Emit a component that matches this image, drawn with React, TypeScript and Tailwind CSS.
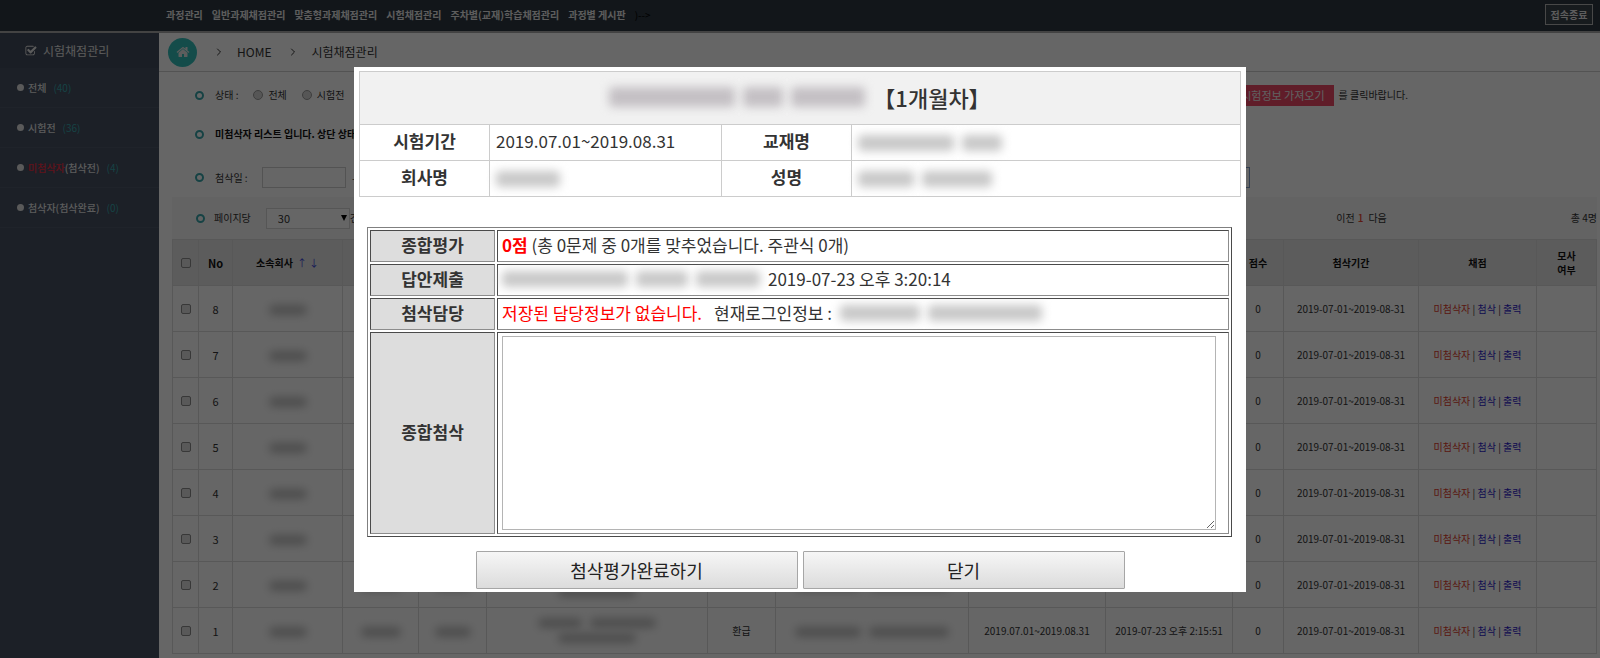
import React from "react";
import { FiChevronRight } from "react-icons/fi";

const NAV = ["과정관리", "일반과제채점관리", "맞춤형과제채점관리", "시험채점관리", "주차별(교재)학습채점관리", "과정별 게시판"];

const SIDE = [
  { label: "전체", alert: "", count: 40 },
  { label: "시험전", alert: "", count: 36 },
  { label: "(첨삭전)", alert: "미첨삭자", count: 4 },
  { label: "첨삭자(첨삭완료)", alert: "", count: 0 },
];

const ROWS = [8, 7, 6, 5, 4, 3, 2, 1];

function HomeIcon() {
  return (
    <svg viewBox="0 0 1792 1792" className="size-[14px]" fill="currentColor" aria-hidden="true">
      <path d="M1472 992v480q0 26-19 45t-45 19h-384v-384h-256v384h-384q-26 0-45-19t-19-45v-480q0-1 .5-3t.5-3l575-474 575 474q1 2 1 6zm223-69l-62 74q-8 9-21 11h-3q-13 0-21-7l-692-577-692 577q-12 8-24 7-13-2-21-11l-62-74q-8-10-7-23.5t11-21.5l719-599q32-26 76-26t76 26l244 204v-195q0-14 9-23t23-9h192q14 0 23 9t9 23v408l219 182q10 8 11 21.5t-7 23.5z" />
    </svg>
  );
}

function CheckSquareIcon() {
  return (
    <svg viewBox="0 0 1792 1792" className="size-3" fill="currentColor" aria-hidden="true">
      <path d="M1472 930v318q0 119-84.5 203.5t-203.5 84.5h-832q-119 0-203.5-84.5t-84.5-203.5v-832q0-119 84.5-203.5t203.5-84.5h832q63 0 117 25 15 7 18 23 3 17-9 29l-49 49q-10 10-23 10-3 0-9-2-23-6-45-6h-832q-66 0-113 47t-47 113v832q0 66 47 113t113 47h832q66 0 113-47t47-113v-254q0-13 9-22l64-64q10-10 23-10 6 0 12 3 20 8 20 29zm231-489l-814 814q-24 24-57 24t-57-24l-430-430q-24-24-24-57t24-57l110-110q24-24 57-24t57 24l263 263 647-647q24-24 57-24t57 24l110 110q24 24 24 57t-24 57z" />
    </svg>
  );
}

function Ring() {
  return <span className="size-[9px] shrink-0 rounded-full border-2 border-[#38a6ab]" />;
}

/* Redacted value: a run of blurred bars. */
function Redacted({ bars, className }: { bars: number[]; className: string }) {
  return (
    <span className="inline-flex items-center gap-2 align-middle" aria-hidden="true">
      {bars.map((w, i) => (
        <span key={i} className={className} style={{ width: w }} />
      ))}
    </span>
  );
}

const PAGE_SMUDGE = "h-[10px] rounded-full bg-[#c2c2c2] blur-[4px]";
const DIALOG_SMUDGE = "h-4 rounded-sm bg-[#c8c8c8] blur-[5px]";

function Tick({ label }: { label: string }) {
  return (
    <input
      type="checkbox"
      aria-label={label}
      className="block mx-auto size-[10px] appearance-none rounded-[2px] border border-[#8c8c8c] bg-[#dedede]"
    />
  );
}

function Radio({ id, label }: { id: string; label: string }) {
  return (
    <span className="flex items-center gap-[5px]">
      <input
        type="radio"
        id={id}
        name="status"
        className="size-[10px] appearance-none rounded-full border border-[#9c9c9c] bg-[#d6d6d6]"
      />
      <label htmlFor={id}>{label}</label>
    </span>
  );
}

function Page() {
  return (
    <div className="flex min-h-screen flex-col bg-white text-[10px] leading-[14px] text-[#333]">
      <header className="flex h-[33px] items-center border-b-2 border-[#a8a8a8] bg-[#2d3841] pr-[7px] pb-[2px] pl-[166px] font-bold text-[#e8e8e8]">
        <nav className="flex grow items-center gap-[9px]">
          {NAV.map((n) => (
            <a key={n} href="#">{n}</a>
          ))}
          <span className="font-normal text-black">)--&gt;</span>
        </nav>
        <button type="button" className="h-[21px] w-12 border border-[#b4b4b4] bg-[#3a444c]">접속종료</button>
      </header>

      <div className="flex grow">
        <aside className="w-[159px] shrink-0 bg-[#465062] text-[#e4e4e4]">
          <h2 className="flex h-[35px] items-center gap-[6px] bg-[#434c5c] pl-[25px] text-xs">
            <CheckSquareIcon />
            시험채점관리
          </h2>
          <ul className="font-medium">
            {SIDE.map((s) => (
              <li key={s.label} className="h-10 border-b border-[#4e586a]">
                <a href="#" className="flex h-full items-center pl-[17px]">
                  <span className="mr-1 size-[7px] rounded-full bg-[#e0e0e0]" />
                  {s.alert && <span className="text-[#f02d43]">{s.alert}</span>}
                  {s.label}
                  <span className="ml-[7px] font-normal text-[#38a6ab]">({s.count})</span>
                </a>
              </li>
            ))}
          </ul>
        </aside>

        <main className="min-w-0 grow">
          <div className="flex h-[39px] items-center border-b border-[#cfcfcf] pl-[9px] text-xs">
            <a href="#" aria-label="홈" className="flex size-[29px] items-center justify-center rounded-full bg-[#33bfba] text-[#e8e8e8]">
              <HomeIcon />
            </a>
            <FiChevronRight className="ml-4 size-3" />
            <a href="#" className="ml-3">HOME</a>
            <FiChevronRight className="ml-4 size-3" />
            <span className="ml-3">시험채점관리</span>
          </div>

          <div className="pr-[3px] pl-[13px]">
            <div className="flex h-[46px] items-center pl-[23px]">
              <Ring />
              <span className="ml-[11px]">상태 :</span>
              <div className="ml-[15px] flex gap-[15px]">
                <Radio id="status-all" label="전체" />
                <Radio id="status-before" label="시험전" />
              </div>
              <button type="button" className="ml-auto h-[21px] bg-[#f04a68] px-[9px] text-[11px] text-[#f2f2f2]">
                시험정보 가져오기
              </button>
              <span className="mr-[189px] ml-[5px]">를 클릭바랍니다.</span>
            </div>

            <div className="flex h-8 items-center pl-[23px] font-bold text-[#111]">
              <Ring />
              <span className="ml-[11px]">미첨삭자 리스트 입니다. 상단 상태</span>
            </div>

            <div className="flex h-[47px] items-end pb-[9px] pl-[23px]">
              <div className="flex grow items-center">
                <Ring />
                <label htmlFor="edit-date" className="ml-[11px] w-[47px]">첨삭일 :</label>
                <input id="edit-date" className="h-[21px] w-[84px] border border-[#d0d0d0] bg-white px-1" />
                <span className="ml-[6px]">-</span>
                <button type="button" aria-label="검색" className="mr-[347px] ml-auto h-[21px] w-10 border border-[#7d9cc8]" />
              </div>
            </div>

            <div className="flex h-[42px] items-center bg-[#f7f7f7] pl-6">
              <Ring />
              <label htmlFor="page-size" className="ml-[9px]">페이지당</label>
              <span className="ml-[15px] flex h-[21px] w-[84px] items-center border border-[#d8d8d8] bg-white pr-[2px]">
                <select id="page-size" className="h-full grow appearance-none pl-[11px] text-[11px] outline-none">
                  <option>30</option>
                </select>
                <svg viewBox="0 0 6 6" className="size-[6px]" aria-hidden="true">
                  <path d="M0 0h6L3 6z" fill="#000" />
                </svg>
              </span>
              <span>건</span>
              <span className="mr-[184px] ml-auto flex gap-[3px]">
                <a href="#">이전</a>
                <b className="font-medium text-[#e8452f]">1</b>
                <a href="#" className="ml-[2px]">다음</a>
              </span>
              <span>총 4명</span>
            </div>

            <table className="w-full table-fixed border-collapse text-center [&_td]:border [&_td]:border-[#dcdcdc] [&_th]:border [&_th]:border-[#dcdcdc]">
              <colgroup>
                <col className="w-[26px]" />
                <col className="w-[34px]" />
                <col className="w-[110px]" />
                <col className="w-[76px]" />
                <col className="w-[68px]" />
                <col />
                <col className="w-[68px]" />
                <col className="w-[193px]" />
                <col className="w-[137px]" />
                <col className="w-[127px]" />
                <col className="w-[51px]" />
                <col className="w-[135px]" />
                <col className="w-[118px]" />
                <col className="w-[60px]" />
              </colgroup>
              <thead>
                <tr className="h-[46px] bg-[#e6e6e6] text-[#111]">
                  <th><Tick label="전체 선택" /></th>
                  <th className="text-[11px]">No</th>
                  <th>
                    소속회사
                    <a href="#" className="ml-1 font-normal text-[#3a42d8]">↑</a>
                    <a href="#" className="ml-[2px] font-normal text-[#3a42d8]">↓</a>
                  </th>
                  <th /><th /><th /><th /><th /><th /><th />
                  <th>점수</th>
                  <th>첨삭기간</th>
                  <th>채점</th>
                  <th>모사<br />여부</th>
                </tr>
              </thead>
              <tbody>
                {ROWS.map((n) => (
                  <tr key={n} className="h-[46px]">
                    <td><Tick label={`${n}번 선택`} /></td>
                    <td className="text-[11px]">{n}</td>
                    <td><Redacted bars={[38]} className={PAGE_SMUDGE} /></td>
                    <td><Redacted bars={[40]} className={PAGE_SMUDGE} /></td>
                    <td><Redacted bars={[36]} className={PAGE_SMUDGE} /></td>
                    <td>
                      <span className="flex flex-col items-center gap-[5px]">
                        <Redacted bars={[44, 66]} className={PAGE_SMUDGE} />
                        <Redacted bars={[78]} className={PAGE_SMUDGE} />
                      </span>
                    </td>
                    <td>{n === 1 && "환급"}</td>
                    <td><Redacted bars={[66, 80]} className={PAGE_SMUDGE} /></td>
                    <td>{n === 1 && "2019.07.01~2019.08.31"}</td>
                    <td>{n === 1 && "2019-07-23 오후 2:15:51"}</td>
                    <td>0</td>
                    <td>2019-07-01~2019-08-31</td>
                    <td>
                      <a href="#" className="text-[#e03c2c]">미첨삭자</a> |{" "}
                      <a href="#" className="text-[#2c22c8]">첨삭</a> |{" "}
                      <a href="#" className="text-[#2c22c8]">출력</a>
                    </td>
                    <td />
                  </tr>
                ))}
              </tbody>
            </table>
          </div>
        </main>
      </div>
    </div>
  );
}

const ACTION =
  "h-[38px] w-[322px] rounded-[1px] border border-[#a6a6a6] bg-linear-to-b from-[#f6f6f6] to-[#dcdcdc] text-lg leading-6 text-[#222]";

function ReviewDialog() {
  return (
    <section
      role="dialog"
      aria-modal="true"
      aria-label="첨삭"
      className="w-full max-w-[892px] bg-white px-[5px] pt-1 pb-[3px] text-[17px] leading-6 text-[#333]"
    >
      <table className="w-full table-fixed border-collapse [&_td]:border [&_td]:border-[#ccc] [&_td]:px-[6px] [&_td]:pb-[2px] [&_th]:border [&_th]:border-[#ccc] [&_th]:pb-[2px]">
        <colgroup>
          <col className="w-[130px]" />
          <col className="w-[232px]" />
          <col className="w-[130px]" />
          <col />
        </colgroup>
        <tbody>
          <tr className="h-[53px] bg-[#f1f1f1]">
            <th colSpan={4} className="text-[22px] font-medium">
              <span className="flex items-center justify-center gap-2">
                <Redacted bars={[126, 40, 74]} className="h-5 rounded-sm bg-[#c4c0c4] blur-[5px]" />
                <span>【1개월차】</span>
              </span>
            </th>
          </tr>
          <tr className="h-9">
            <th>시험기간</th>
            <td>2019.07.01~2019.08.31</td>
            <th>교재명</th>
            <td><Redacted bars={[96, 40]} className={DIALOG_SMUDGE} /></td>
          </tr>
          <tr className="h-9">
            <th>회사명</th>
            <td><Redacted bars={[64]} className={DIALOG_SMUDGE} /></td>
            <th>성명</th>
            <td><Redacted bars={[56, 70]} className={DIALOG_SMUDGE} /></td>
          </tr>
        </tbody>
      </table>

      <div className="mt-[30px] pr-[9px] pl-2">
        <table className="w-full table-fixed border-separate border-spacing-[2px] border border-t-[#808080] border-r-[#4a4a4a] border-b-[#4a4a4a] border-l-[#808080] [&_td]:border [&_td]:border-t-[#4a4a4a] [&_td]:border-r-[#8c8c8c] [&_td]:border-b-[#8c8c8c] [&_td]:border-l-[#4a4a4a] [&_td]:px-1 [&_td]:pb-[2px] [&_th]:border [&_th]:border-t-[#4a4a4a] [&_th]:border-r-[#8c8c8c] [&_th]:border-b-[#8c8c8c] [&_th]:border-l-[#4a4a4a] [&_th]:bg-[#ddd] [&_th]:pb-[2px]">
          <colgroup>
            <col className="w-[125px]" />
            <col />
          </colgroup>
          <tbody>
            <tr className="h-8">
              <th>종합평가</th>
              <td><b className="text-[#f00]">0점</b> (총 0문제 중 0개를 맞추었습니다. 주관식 0개)</td>
            </tr>
            <tr className="h-8">
              <th>답안제출</th>
              <td>
                <span className="flex items-center gap-2">
                  <Redacted bars={[126, 52, 64]} className={DIALOG_SMUDGE} />
                  2019-07-23 오후 3:20:14
                </span>
              </td>
            </tr>
            <tr className="h-8">
              <th>첨삭담당</th>
              <td>
                <span className="flex items-center">
                  <span className="mr-3 text-[#f00]">저장된 담당정보가 없습니다.</span>
                  <span className="mr-2">현재로그인정보 :</span>
                  <Redacted bars={[80, 114]} className={DIALOG_SMUDGE} />
                </span>
              </td>
            </tr>
            <tr>
              <th><label htmlFor="review">종합첨삭</label></th>
              <td className="py-[3px]! pr-3!">
                <textarea id="review" className="block h-[194px] w-full resize border border-[#b4b4b4] bg-white p-1" />
              </td>
            </tr>
          </tbody>
        </table>
      </div>

      <div className="mt-[14px] flex justify-center gap-[5px]">
        <button type="button" className={ACTION}>첨삭평가완료하기</button>
        <button type="button" className={ACTION}>닫기</button>
      </div>
    </section>
  );
}

export default function App() {
  return (
    <div className="relative font-['Noto_Sans_CJK_KR','Noto_Sans',sans-serif]">
      <Page />
      <div className="fixed inset-0 flex items-center justify-center bg-black/60">
        <ReviewDialog />
      </div>
    </div>
  );
}
